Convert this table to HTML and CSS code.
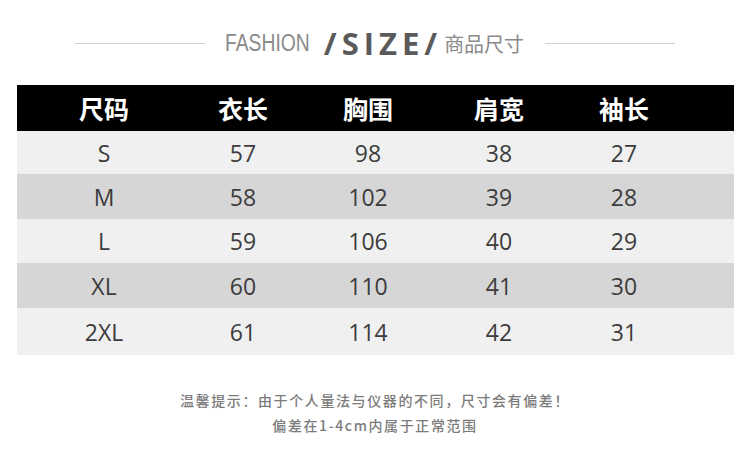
FILE: index.html
```html
<!DOCTYPE html>
<html lang="zh">
<head>
<meta charset="utf-8">
<link rel="stylesheet" href="styles.css">
</head>
<body>
<div class="page">
  <div class="title">
    <span class="line"></span>
    <span class="fashion">FASHION</span>
    <span class="size"><span class="slash">/</span>SIZE<span class="slash">/</span></span>
    <span class="cn">商品尺寸</span>
    <span class="line"></span>
  </div>
  <div class="table">
    <div class="row head"><span>尺码</span><span>衣长</span><span>胸围</span><span>肩宽</span><span>袖长</span><span></span></div>
    <div class="row light r1"><span>S</span><span>57</span><span>98</span><span>38</span><span>27</span><span></span></div>
    <div class="row dark r2"><span>M</span><span>58</span><span>102</span><span>39</span><span>28</span><span></span></div>
    <div class="row light r3"><span>L</span><span>59</span><span>106</span><span>40</span><span>29</span><span></span></div>
    <div class="row dark r4"><span>XL</span><span>60</span><span>110</span><span>41</span><span>30</span><span></span></div>
    <div class="row light r5"><span>2XL</span><span>61</span><span>114</span><span>42</span><span>31</span><span></span></div>
  </div>
  <div class="note">
    <p>温馨提示：由于个人量法与仪器的不同，尺寸会有偏差！</p>
    <p>偏差在1-4cm内属于正常范围</p>
  </div>
</div>
</body>
</html>
```

FILE: styles.css
```css
html, body {
  margin: 0;
  padding: 0;
  background: #fff;
}
.page {
  width: 750px;
  height: 466px;
  font-family: "Open Sans", "Noto Sans CJK SC", sans-serif;
}
.title {
  display: flex;
  align-items: center;
  justify-content: center;
  height: 30px;
  padding-top: 28px;
}
.line {
  display: block;
  width: 130px;
  height: 1px;
  background: #cfcfcf;
}
.fashion {
  display: inline-block;
  font-family: "Liberation Sans", sans-serif;
  font-size: 23px;
  color: #8a8a8a;
  margin-left: 20px;
  margin-right: -2px;
  transform: scaleX(0.84);
  transform-origin: left center;
}
.size {
  font-family: "Open Sans", sans-serif;
  font-weight: 700;
  font-size: 31px;
  color: #5a5a5a;
  letter-spacing: 5px;
}
.cn {
  font-family: "Noto Sans CJK SC", sans-serif;
  font-size: 20px;
  color: #8a8a8a;
  margin-left: 2px;
  margin-right: 21px;
}
.table {
  margin-top: 27px;
  margin-left: 17px;
  width: 717px;
}
.row {
  display: grid;
  grid-template-columns: 174px 104px 146px 116px 134px 43px;
  align-items: center;
  text-align: center;
  font-size: 23px;
  color: #3c3c3c;
}
.row span {
  display: block;
}
.head {
  background: #000;
  color: #fff;
  height: 46px;
  font-family: "Noto Sans CJK SC", sans-serif;
  font-weight: 700;
  font-size: 25px;
}
.light { background: #f0f0f0; }
.dark { background: #d6d6d6; }
.r1 { height: 43px; }
.r2 { height: 45px; }
.r3 { height: 44px; }
.r4 { height: 45px; }
.r5 { height: 47px; }
.note {
  margin-top: 33px;
  text-align: center;
  font-family: "Noto Sans CJK SC", sans-serif;
  font-size: 14px;
  font-weight: 500;
  letter-spacing: 1.6px;
  color: #7c7c7c;
}
.note p {
  margin: 0;
  line-height: 25px;
}
```
